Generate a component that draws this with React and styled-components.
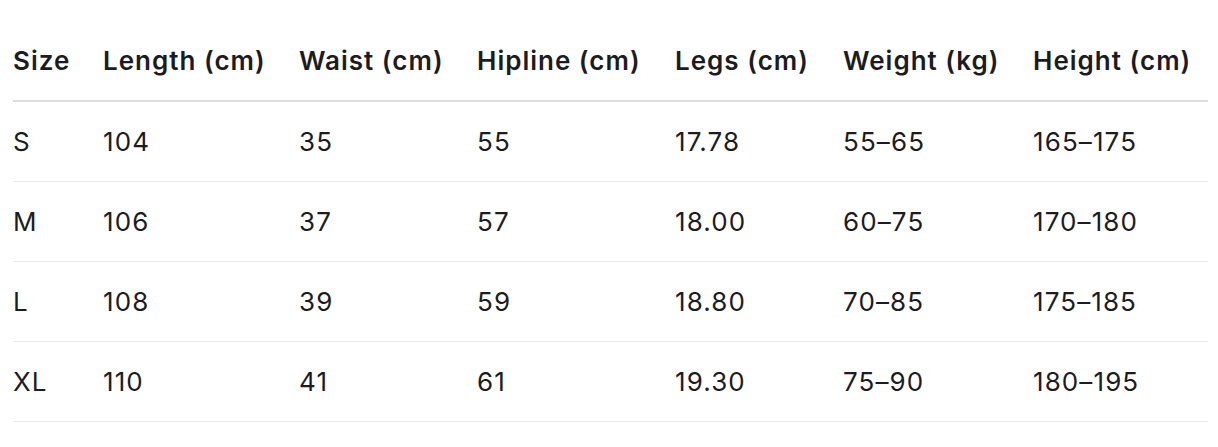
import React from "react";
import styled, { createGlobalStyle } from "styled-components";

const GlobalStyle = createGlobalStyle`
  body {
    margin: 0;
    background: #fff;
    font-family: Inter, "Open Sans", "Liberation Sans", sans-serif;
    color: #1c1c1e;
  }
`;

const Wrapper = styled.div`
  padding: 20px 10px 0 13px;
`;

const Table = styled.table`
  width: 1195px;
  border-collapse: collapse;
  table-layout: fixed;
`;

const HeadCell = styled.th`
  height: 80px;
  padding: 0;
  text-align: left;
  font-size: 26px;
  font-weight: 600;
  letter-spacing: 1px;
  color: #1c1c1e;
  border-bottom: 2px solid #dcdcdc;
  white-space: nowrap;
`;

const Row = styled.tr`
  border-bottom: 1px solid #e9e9e9;
`;

const Cell = styled.td`
  height: 79px;
  padding: 0;
  font-size: 26px;
  font-weight: 400;
  letter-spacing: 1.1px;
  color: #1c1c1e;
  white-space: nowrap;
`;

const columns = [
  { label: "Size", width: 90 },
  { label: "Length (cm)", width: 196 },
  { label: "Waist (cm)", width: 178 },
  { label: "Hipline (cm)", width: 198 },
  { label: "Legs (cm)", width: 168 },
  { label: "Weight (kg)", width: 190 },
  { label: "Height (cm)", width: 175 },
];

const sizes = [
  ["S", "104", "35", "55", "17.78", "55–65", "165–175"],
  ["M", "106", "37", "57", "18.00", "60–75", "170–180"],
  ["L", "108", "39", "59", "18.80", "70–85", "175–185"],
  ["XL", "110", "41", "61", "19.30", "75–90", "180–195"],
];

const SizeChart = () => {
  return (
    <Table>
      <colgroup>
        {columns.map((col) => (
          <col key={col.label} style={{ width: col.width }} />
        ))}
      </colgroup>
      <thead>
        <tr>
          {columns.map((col) => (
            <HeadCell key={col.label}>{col.label}</HeadCell>
          ))}
        </tr>
      </thead>
      <tbody>
        {sizes.map((row) => (
          <Row key={row[0]}>
            {row.map((value, i) => (
              <Cell key={i}>{value}</Cell>
            ))}
          </Row>
        ))}
      </tbody>
    </Table>
  );
};

const App = () => {
  return (
    <>
      <GlobalStyle />
      <Wrapper>
        <SizeChart />
      </Wrapper>
    </>
  );
};

export default App;
